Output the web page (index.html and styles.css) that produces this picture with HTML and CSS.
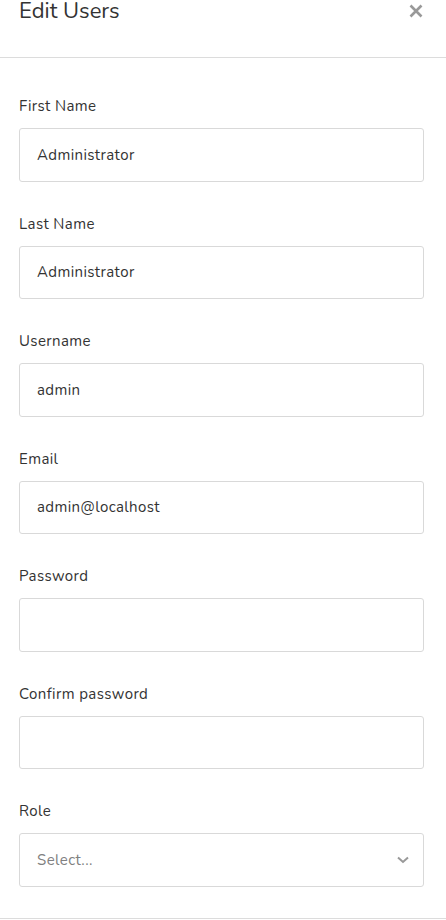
FILE: index.html
```html
<!DOCTYPE html>
<html lang="en">
<head>
<meta charset="utf-8">
<title>Edit Users</title>
<link rel="stylesheet" href="styles.css">
</head>
<body>
<div class="modal">
  <div class="modal-header">
    <h2 class="modal-title">Edit Users</h2>
    <button class="close" type="button" aria-label="Close">
      <svg width="14" height="14" viewBox="0 0 14 14"><path d="M1.5 1.5 L12.5 12.5 M12.5 1.5 L1.5 12.5" stroke="#999" stroke-width="2.6" stroke-linecap="butt"/></svg>
    </button>
  </div>
  <form class="modal-body">
    <div class="field">
      <label class="label">First Name</label>
      <div class="input">Administrator</div>
    </div>
    <div class="field">
      <label class="label">Last Name</label>
      <div class="input">Administrator</div>
    </div>
    <div class="field">
      <label class="label">Username</label>
      <div class="input">admin</div>
    </div>
    <div class="field">
      <label class="label">Email</label>
      <div class="input">admin@localhost</div>
    </div>
    <div class="field">
      <label class="label">Password</label>
      <div class="input"></div>
    </div>
    <div class="field">
      <label class="label">Confirm password</label>
      <div class="input"></div>
    </div>
    <div class="field">
      <label class="label">Role</label>
      <div class="input select">
        <span class="placeholder">Select...</span>
        <svg class="chevron" width="12" height="8" viewBox="0 0 12 8"><path d="M1 1.5 L6 6 L11 1.5" fill="none" stroke="#999" stroke-width="2"/></svg>
      </div>
    </div>
  </form>
  <div class="modal-footer"></div>
</div>
</body>
</html>
```

FILE: styles.css
```css
html, body {
  margin: 0;
  padding: 0;
  background: #fff;
}
body {
  font-family: "Nunito", "Open Sans", "Liberation Sans", sans-serif;
  color: #333;
}
.modal {
  width: 446px;
}
.modal-header {
  height: 58px;
  border-bottom: 1px solid #dcdcdc;
  display: flex;
  align-items: flex-start;
  justify-content: space-between;
  padding: 0 19px;
  box-sizing: border-box;
}
.modal-title {
  margin: -3px 0 0;
  font-size: 22px;
  font-weight: 400;
  line-height: 28px;
  color: #333;
}
.close {
  border: 0;
  background: none;
  padding: 0;
  margin: 4px 4px 0 0;
  width: 14px;
  height: 14px;
  display: flex;
  cursor: pointer;
}
.modal-body {
  padding: 37px 22px 0 19px;
  display: flex;
  flex-direction: column;
  gap: 31px;
}
.field {
  display: flex;
  flex-direction: column;
  gap: 11px;
}
.label {
  font-size: 15px;
  line-height: 22px;
  letter-spacing: 0.4px;
  color: #333;
}
.input {
  border: 1px solid #d9d9d9;
  border-radius: 3px;
  padding: 0 17px;
  display: flex;
  align-items: center;
  font-size: 15px;
  letter-spacing: 0.4px;
  color: #333;
  box-sizing: border-box;
  height: 53.5px;
}
.select {
  justify-content: space-between;
  padding-right: 14px;
}
.placeholder {
  color: #808080;
}
.modal-footer {
  margin-top: 31px;
  border-top: 1px solid #dcdcdc;
  height: 10px;
}
```
